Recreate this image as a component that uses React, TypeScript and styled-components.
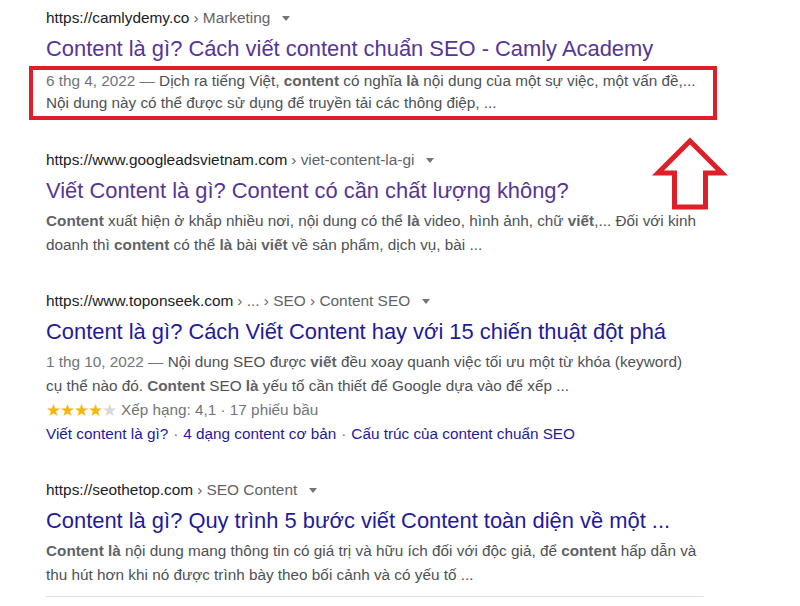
import React from "react";
import styled, { createGlobalStyle } from "styled-components";

const GlobalStyle = createGlobalStyle`
  html, body {
    margin: 0;
    padding: 0;
    background: #ffffff;
  }
  body {
    font-family: "Liberation Sans", Arial, sans-serif;
    color: #4d5156;
  }
`;

type Tone = "visited" | "link";

type ResultData = {
  domain: string;
  crumbs: string;
  title: string;
  tone: Tone;
  lines: React.ReactNode[];
  highlight?: boolean;
  rating?: boolean;
  sitelinks?: string[];
};

const Page = styled.div`
  position: relative;
  width: 800px;
  height: 606px;
  overflow: hidden;
  padding: 8px 0 0 46px;
  box-sizing: border-box;
`;

const List = styled.div`
  display: flex;
  flex-direction: column;
  gap: 34px;
  width: 657px;
`;

const ResultBox = styled.div`
  display: flex;
  flex-direction: column;
`;

const UrlRow = styled.div`
  display: flex;
  align-items: center;
  height: 20px;
  font-size: 15.4px;
  line-height: 20px;
  color: #202124;
  white-space: nowrap;
`;

const Crumbs = styled.span`
  color: #5f6368;
  margin-left: 4px;
`;

const Caret = styled.span`
  display: inline-block;
  margin-left: 12px;
  margin-top: 1px;
  width: 0;
  height: 0;
  border-left: 4px solid transparent;
  border-right: 4px solid transparent;
  border-top: 5px solid #70757a;
`;

const Title = styled.div<{ $tone: Tone }>`
  margin-top: 6px;
  font-size: 21.9px;
  line-height: 30px;
  white-space: nowrap;
  color: ${(p) => (p.$tone === "visited" ? "#563596" : "#1f1a9c")};
`;

const Snippet = styled.div`
  margin-top: 3px;
  font-size: 15.3px;
  line-height: 24px;
  color: #4d5156;
  white-space: nowrap;
  b {
    font-weight: 700;
    color: #5f6368;
  }
`;

const Highlight = styled.div`
  margin: 2px -17px -4px -17px;
  padding: 0 0 2px 13px;
  border: 4px solid #de1f27;
  width: 667px;
  font-size: 15.3px;
  line-height: 22px;
  color: #4d5156;
  white-space: nowrap;
  b {
    font-weight: 700;
    color: #5f6368;
  }
`;

const Date = styled.span`
  color: #70757a;
`;

const RatingRow = styled.div`
  display: flex;
  align-items: center;
  height: 24px;
  font-size: 15.3px;
  color: #70757a;
  white-space: nowrap;
`;

const Star = styled.span<{ $on: boolean }>`
  font-size: 17px;
  line-height: 1;
  width: 14px;
  color: ${(p) => (p.$on ? "#f5b70c" : "#d6d8db")};
`;

const RatingText = styled.span`
  margin-left: 5px;
`;

const Sitelinks = styled.div`
  height: 24px;
  font-size: 15.3px;
  line-height: 24px;
  color: #1f1a9c;
  white-space: nowrap;
`;

const Dot = styled.span`
  color: #70757a;
  margin: 0 5px;
`;

const Divider = styled.div`
  margin-top: 9px;
  height: 1px;
  background: #dfe1e5;
  width: 657px;
`;

const Arrow = styled.svg`
  position: absolute;
  left: 650px;
  top: 133px;
`;

const results: ResultData[] = [
  {
    domain: "https://camlydemy.co",
    crumbs: "› Marketing",
    title: "Content là gì? Cách viết content chuẩn SEO - Camly Academy",
    tone: "visited",
    highlight: true,
    lines: [
      <>
        <Date>6 thg 4, 2022 — </Date>Dịch ra tiếng Việt, <b>content</b> có nghĩa{" "}
        <b>là</b> nội dung của một sự việc, một vấn đề,...
      </>,
      <>Nội dung này có thể được sử dụng để truyền tải các thông điệp, ...</>,
    ],
  },
  {
    domain: "https://www.googleadsvietnam.com",
    crumbs: "› viet-content-la-gi",
    title: "Viết Content là gì? Content có cần chất lượng không?",
    tone: "visited",
    lines: [
      <>
        <b>Content</b> xuất hiện ở khắp nhiều nơi, nội dung có thể <b>là</b> video,
        hình ảnh, chữ <b>viết</b>,... Đối với kinh
      </>,
      <>
        doanh thì <b>content</b> có thể <b>là</b> bài <b>viết</b> về sản phẩm, dịch
        vụ, bài ...
      </>,
    ],
  },
  {
    domain: "https://www.toponseek.com",
    crumbs: "› ... › SEO › Content SEO",
    title: "Content là gì? Cách Viết Content hay với 15 chiến thuật đột phá",
    tone: "link",
    rating: true,
    sitelinks: [
      "Viết content là gì?",
      "4 dạng content cơ bản",
      "Cấu trúc của content chuẩn SEO",
    ],
    lines: [
      <>
        <Date>1 thg 10, 2022 — </Date>Nội dung SEO được <b>viết</b> đều xoay quanh
        việc tối ưu một từ khóa (keyword)
      </>,
      <>
        cụ thể nào đó. <b>Content</b> SEO <b>là</b> yếu tố cần thiết để Google dựa
        vào để xếp ...
      </>,
    ],
  },
  {
    domain: "https://seothetop.com",
    crumbs: "› SEO Content",
    title: "Content là gì? Quy trình 5 bước viết Content toàn diện về một ...",
    tone: "link",
    lines: [
      <>
        <b>Content là</b> nội dung mang thông tin có giá trị và hữu ích đối với độc
        giả, để <b>content</b> hấp dẫn và
      </>,
      <>thu hút hơn khi nó được trình bày theo bối cảnh và có yếu tố ...</>,
    ],
  },
];

const Result = ({ r }: { r: ResultData }) => {
  const body = r.lines.map((line, i) => (
    <React.Fragment key={i}>
      {line}
      {i < r.lines.length - 1 && <br />}
    </React.Fragment>
  ));
  return (
    <ResultBox>
      <UrlRow>
        {r.domain}
        <Crumbs>{r.crumbs}</Crumbs>
        <Caret />
      </UrlRow>
      <Title $tone={r.tone}>{r.title}</Title>
      {r.highlight ? <Highlight>{body}</Highlight> : <Snippet>{body}</Snippet>}
      {r.rating && (
        <RatingRow>
          {[0, 1, 2, 3, 4].map((i) => (
            <Star key={i} $on={i < 4}>
              ★
            </Star>
          ))}
          <RatingText>Xếp hạng: 4,1 · 17 phiếu bầu</RatingText>
        </RatingRow>
      )}
      {r.sitelinks && (
        <Sitelinks>
          {r.sitelinks.map((s, i) => (
            <React.Fragment key={s}>
              {i > 0 && <Dot>·</Dot>}
              {s}
            </React.Fragment>
          ))}
        </Sitelinks>
      )}
    </ResultBox>
  );
};

export default function App() {
  return (
    <>
      <GlobalStyle />
      <Page>
        <List>
          {results.map((r) => (
            <Result key={r.domain} r={r} />
          ))}
        </List>
        <Divider />
        <Arrow width="80" height="82" viewBox="0 0 80 82">
          <polygon
            points="40,8 72,40 55.5,40 55.5,74 24.5,74 24.5,40 8,40"
            fill="none"
            stroke="#de1f27"
            strokeWidth="5"
            strokeLinejoin="miter"
          />
        </Arrow>
      </Page>
    </>
  );
}
